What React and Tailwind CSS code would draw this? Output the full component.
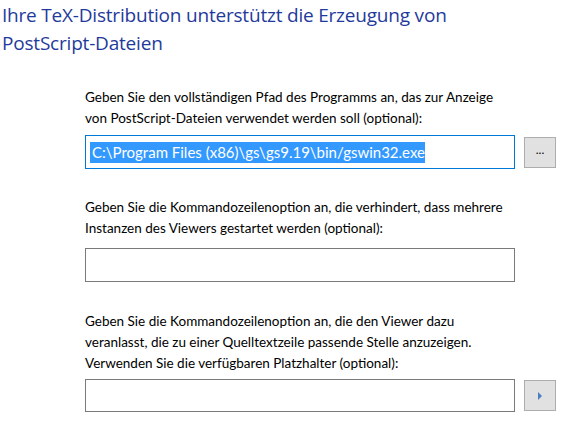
import React from "react";

const font = { fontFamily: 'Lato, "Open Sans", sans-serif' };

function Label({ children }) {
  return <p className="text-[13.5px] leading-[21px] text-black">{children}</p>;
}

export default function App() {
  return (
    <div className="w-[576px] h-[432px] bg-white overflow-hidden" style={font}>
      <h1
        className="pl-[2px] pt-[1px] text-[19px] leading-[28px] font-normal text-[#1f3a9c] tracking-[-0.2px]"
        style={{ fontFamily: '"Open Sans", sans-serif' }}
      >
        Ihre TeX-Distribution unterstützt die Erzeugung von
        <br />
        PostScript-Dateien
      </h1>

      <div className="pl-[85px] pr-[20px]">
        <div className="mt-[30px]">
          <Label>
            Geben Sie den vollständigen Pfad des Programms an, das zur Anzeige
            <br />
            von PostScript-Dateien verwendet werden soll (optional):
          </Label>
          <div className="mt-[6px] flex items-center gap-[9px]">
            <div className="w-[430px] h-[34px] border border-[#0078d7] flex items-center px-[4px]">
              <span className="bg-[#3399ff] text-white text-[15px] leading-[21px] pl-[2px]">
                C:\Program Files (x86)\gs\gs9.19\bin/gswin32.exe
              </span>
            </div>
            <button className="w-[32px] h-[31px] bg-[#e1e1e1] border border-[#adadad] text-[12px] leading-none pb-[4px]">
              ...
            </button>
          </div>
        </div>

        <div className="mt-[28px]">
          <Label>
            Geben Sie die Kommandozeilenoption an, die verhindert, dass mehrere
            <br />
            Instanzen des Viewers gestartet werden (optional):
          </Label>
          <div className="mt-[9px] w-[430px] h-[34px] border border-[#7a7a7a]" />
        </div>

        <div className="mt-[29px]">
          <Label>
            Geben Sie die Kommandozeilenoption an, die den Viewer dazu
            <br />
            veranlasst, die zu einer Quelltextzeile passende Stelle anzuzeigen.
            <br />
            Verwenden Sie die verfügbaren Platzhalter (optional):
          </Label>
          <div className="mt-[5px] flex items-center gap-[9px]">
            <div className="w-[430px] h-[33px] border border-[#7a7a7a]" />
            <button className="w-[32px] h-[31px] bg-[#e1e1e1] border border-[#adadad] flex items-center justify-center">
              <svg width="6" height="8" viewBox="0 0 6 8">
                <path d="M1 0 L5 4 L1 8 Z" fill="#4a7fc1" />
              </svg>
            </button>
          </div>
        </div>
      </div>
    </div>
  );
}
